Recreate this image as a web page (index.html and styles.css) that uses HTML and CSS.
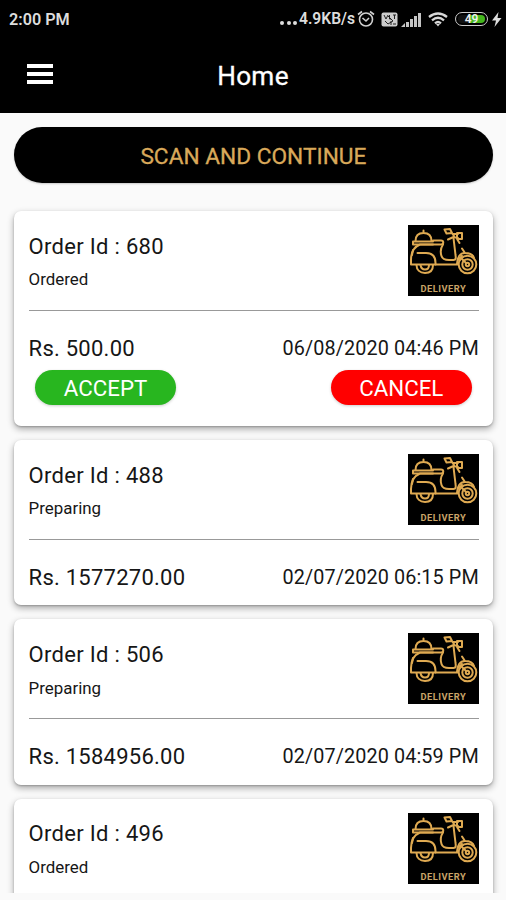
FILE: index.html
```html
<!DOCTYPE html>
<html lang="en">
<head>
<meta charset="utf-8">
<title>Home</title>
<link rel="stylesheet" href="styles.css">
</head>
<body>
<svg class="defs" aria-hidden="true">
  <symbol id="scooter" viewBox="0 0 71 56">
    <g fill="none" stroke="#dfaa52" stroke-width="2" stroke-linecap="round" stroke-linejoin="round">
      <path d="M7.500 16C7.500 10.500 11 8 15.500 8S23.500 10.500 23.500 16M15.500 8V5.500M5 16.500H25M5 19.500H25M5 16.500V19.500"/>
      <path d="M25 15.500H33C36 15.500 36 19.500 33 19.500H12C6 22 3 28 3 35V39.500H50"/>
      <path d="M9.500 28H18C24 28 27.500 31.500 27.500 38V39.500M5 25L4 30"/>
      <path d="M8.500 40C8.500 45 12 48 17 48S25 45 25 40M12.500 40C13 43 14.500 44.500 17 44.500S21 43 21 40"/>
      <path d="M35 19.500C32 24 32.500 28 33.500 31C34.500 34.500 37 35 41 35H45.500C48 35 48 33 47.500 30L45.500 13"/>
      <path d="M36.500 4.500L42 4L44 8L38.500 8.500ZM44 8L46 11M45 9H50M49 8H54V14H49ZM40 14.500L45.500 12L50 13M49 14L51.500 18"/>
      <path d="M49 39C49 32.500 52 28 57 28C62 28 65 29.500 66 33M57 28L54 23.500M50 35L54 31"/>
      <circle cx="59.500" cy="39.500" r="8.800"/><circle cx="59.500" cy="39.500" r="5.200"/><circle cx="59.500" cy="39.500" r="1.700"/>
      <path d="M53 33L58 38"/>
    </g>
  </symbol>
</svg>
<header class="app-header">
  <div class="status">
    <span>2:00 PM</span>
    <div class="status-right">
      <i class="dots"><b></b><b></b><b></b></i>
      <span class="speed">4.9KB/s</span>
      <svg class="alarm" width="18" height="18" viewBox="0 0 18 18" fill="none" stroke="#d0d0d0" stroke-width="1.6"><circle cx="9" cy="9.500" r="6.500"/><path d="M5.500 8L9 11L12 8M1 4.500L5 1.500M17 4.500L13 1.500"/></svg>
      <svg class="volte" width="17" height="15" viewBox="0 0 17 15"><rect x=".5" y=".5" width="16" height="14" rx="2" fill="#ccc"/><path d="M3 3L5 7L7 3M8.500 3V7H10M12 3H15M13.500 3V7M4 9L7 12L12 9M10 9V13M12 12H15M7 4L12 9" fill="none" stroke="#222" stroke-width="1"/></svg>
      <svg class="signal" width="21" height="15" viewBox="0 0 21 15" fill="#c4c4c4"><path d="M0 15L4 11V15ZM5 10H8V15H5ZM9 7H12V15H9ZM13 4H16V15H13ZM17 1H20V15H17Z"/></svg>
      <svg class="wifi" width="20" height="15" viewBox="0 0 20 15" fill="none" stroke="#d8d8d8" stroke-width="2.300"><path d="M1 5Q10-2 19 5M4 8.300Q10 3.300 16 8.300M7 11.300Q10 8.800 13 11.300"/><path d="M8 12L10 14.500L12 12Z" fill="#d8d8d8" stroke="none"/></svg>
      <div class="battery"><div class="battery-fill"><span>49</span></div></div>
      <svg class="bolt" width="10" height="15" viewBox="0 0 10 15"><path d="M6.500 0L0 8.500H4L2.500 15L9.500 6H5.500Z" fill="#ddd"/></svg>
    </div>
  </div>
  <div class="toolbar">
    <div class="menu"><i></i><i></i><i></i></div>
    <h1>Home</h1>
  </div>
</header>
<main>
  <button class="scan">SCAN AND CONTINUE</button>
  <div class="orders">
    <article class="card">
      <div class="top"><div><h2>Order Id : 680</h2><p>Ordered</p></div><div class="logo"><svg><use href="#scooter"/></svg><span>DELIVERY</span></div></div>
      <div class="bottom"><span class="price">Rs. 500.00</span><span class="date">06/08/2020 04:46 PM</span></div>
      <div class="actions"><button class="accept">ACCEPT</button><button class="cancel">CANCEL</button></div>
    </article>
    <article class="card">
      <div class="top"><div><h2>Order Id : 488</h2><p>Preparing</p></div><div class="logo"><svg><use href="#scooter"/></svg><span>DELIVERY</span></div></div>
      <div class="bottom"><span class="price">Rs. 1577270.00</span><span class="date">02/07/2020 06:15 PM</span></div>
    </article>
    <article class="card">
      <div class="top"><div><h2>Order Id : 506</h2><p>Preparing</p></div><div class="logo"><svg><use href="#scooter"/></svg><span>DELIVERY</span></div></div>
      <div class="bottom"><span class="price">Rs. 1584956.00</span><span class="date">02/07/2020 04:59 PM</span></div>
    </article>
    <article class="card">
      <div class="top"><div><h2>Order Id : 496</h2><p>Ordered</p></div><div class="logo"><svg><use href="#scooter"/></svg><span>DELIVERY</span></div></div>
    </article>
  </div>
</main>
</body>
</html>
```
FILE: styles.css
```css
* { box-sizing: border-box; }
body {
  margin: 0;
  height: 900px;
  overflow: hidden;
  background: #fafafa;
  color: #161616;
  font-family: Roboto, "Liberation Sans", sans-serif;
}
h1, h2, p { margin: 0; font-weight: 400; }
button { border: 0; padding: 0; font-family: inherit; }
svg { display: block; flex: none; }
.defs { width: 0; height: 0; position: absolute; }

.app-header { height: 113px; background: #000; color: #fff; }
.status {
  height: 38px;
  padding: 0 4px 0 9px;
  display: flex;
  justify-content: space-between;
  align-items: center;
  font-size: 16.2px;
  font-weight: 600;
  color: #ddd;
}
.status-right { display: flex; align-items: center; }
.dots { display: flex; gap: 2.5px; margin: 7px 2px 0 0; }
.dots b { width: 4px; height: 4px; border-radius: 50%; background: #ddd; }
.speed { width: 55px; font-size: 15.6px; white-space: nowrap; }
.alarm { margin-left: 3px; }
.volte { margin-left: 6px; }
.signal { margin-left: 3px; }
.wifi { margin-left: 6px; }
.battery { margin-left: 7px; width: 33px; height: 14px; padding: 2px; border: 1.5px solid #ccc; border-radius: 7px; }
.battery-fill {
  height: 100%;
  border-radius: 4px;
  background: linear-gradient(90deg, #111 45%, #43b51c 45%);
  display: flex;
  align-items: center;
  justify-content: center;
  font-size: 12px;
  color: #eee;
}
.bolt { margin-left: 4px; }

.toolbar {
  height: 75px;
  padding: 0 27px;
  display: grid;
  grid-template-columns: 1fr auto 1fr;
  align-items: center;
}
.menu { width: 26px; display: grid; gap: 4px; margin-bottom: 3px; }
.menu i { height: 4px; background: #fff; }
h1 { font-size: 26.2px; line-height: 30px; letter-spacing: .3px; -webkit-text-stroke: .3px #fff; }

main { padding: 14px 13.500px 0 14.400px; }
.scan {
  width: 100%;
  height: 56px;
  border-radius: 28px;
  background: #000;
  color: #d9a95a;
  font-size: 22.700px;
  -webkit-text-stroke: .3px #d9a95a;
  display: block;
  padding-top: 2px;
  box-shadow: 0 1px 2px #0003;
}
.orders {
  height: 696px;
  margin: 14px -13.500px 0 -14.400px;
  padding: 14px 13.500px 0 14.400px;
  overflow: hidden;
  display: flex;
  flex-direction: column;
  gap: 14px;
}
.card {
  flex: none;
  min-height: 165.300px;
  padding: 14px 13.700px 0 14.200px;
  border-radius: 7px;
  background: #fff;
  box-shadow: 0 3px 7px #0005, 0 1px 2px #0003;
}
.card:first-child { min-height: 215px; }
.top { height: 86px; display: flex; justify-content: space-between; border-bottom: 1.500px solid #999; }
h2 { margin-top: 8.500px; font-size: 22px; line-height: 26px; letter-spacing: .3px; }
p { margin-top: 9.900px; font-size: 16.900px; line-height: 20px; }
.logo { width: 71px; height: 71px; background: #000; }
.logo svg { width: 71px; height: 56px; }
.logo span { display: block; margin-top: 2px; text-align: center; font-size: 9.300px; line-height: 12px; letter-spacing: .5px; font-weight: 700; color: #c9a468; }
.bottom { height: 58px; padding-top: 25px; display: flex; justify-content: space-between; line-height: 26px; white-space: nowrap; }
.price { font-size: 22px; letter-spacing: .25px; }
.date { font-size: 19.800px; letter-spacing: .12px; }
.actions { display: flex; justify-content: space-between; padding: 1px 7px 0 6.500px; }
.actions button { width: 141px; height: 35px; border-radius: 18px; color: #fff; font-size: 22.300px; padding-top: 1px; box-shadow: 0 1px 3px #0003; }
.accept { background: #28b61f; }
.cancel { background: #f00; }
```
